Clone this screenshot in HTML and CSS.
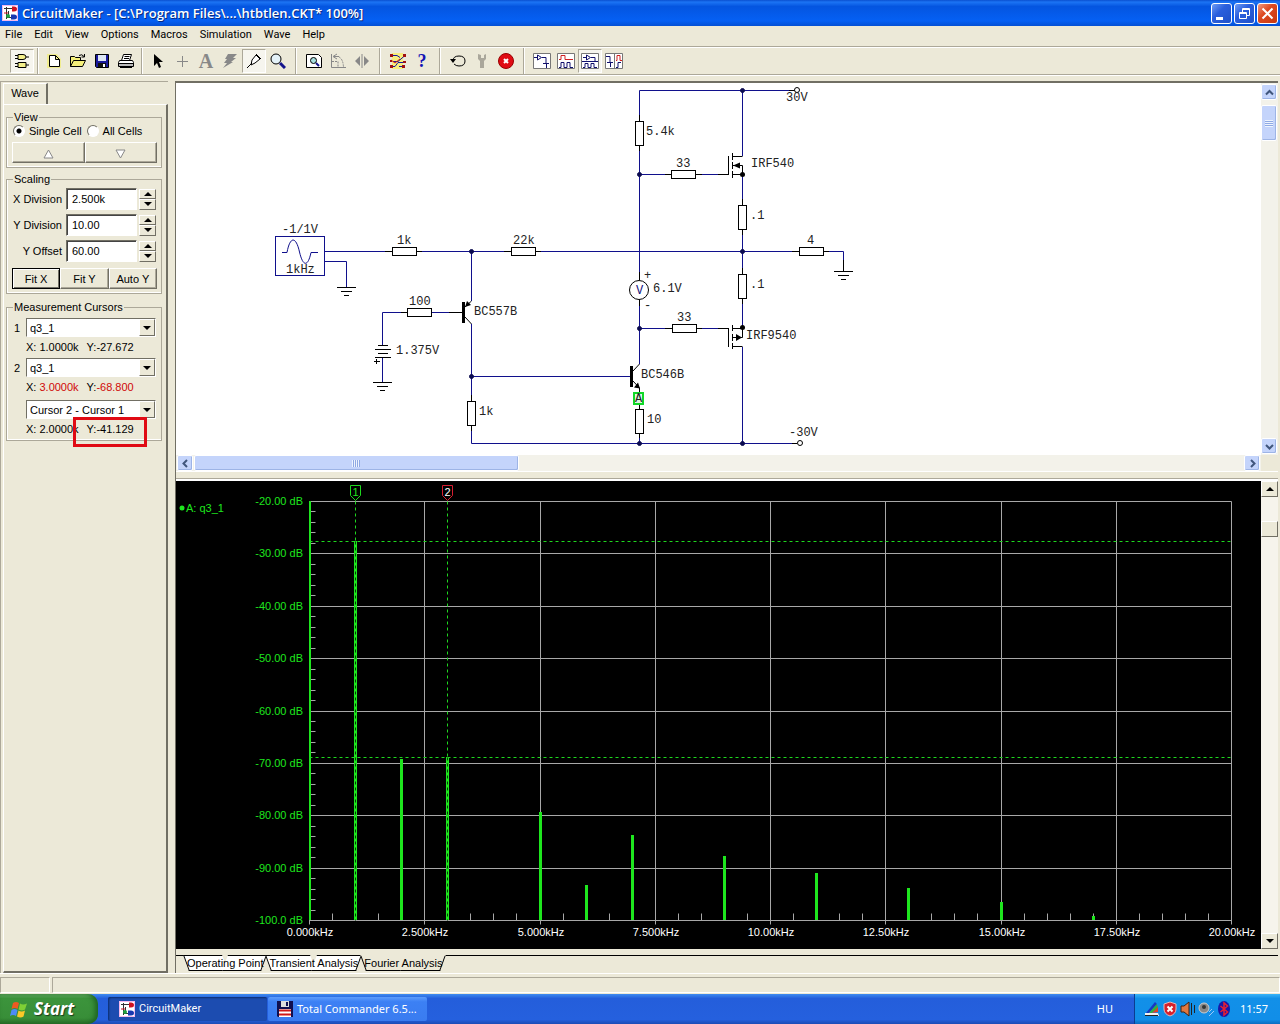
FILE: index.html
```html
<!DOCTYPE html>
<html lang="en">
<head>
    <meta charset="UTF-8">
    <meta name="viewport" content="width=device-width, initial-scale=1.0">
    <title>CircuitMaker</title>
    <link rel="stylesheet" href="styles.css">
</head>
<body>
    <svg class="defs" aria-hidden="true">
        <symbol id="app-icon" viewBox="0 0 16 16">
            <rect width="16" height="16" fill="#f4b8ec"/>
            <rect x="1" y="1" width="14" height="14" fill="#fff"/>
            <path d="M2 3.500H10M4.500 2V14M4.500 12.500H10M6.500 6V10" stroke="#333" fill="none"/>
            <path d="M10 1.500h2q3 0 3 2.500t-3 2.500h-2z" fill="#d01020"/>
            <path d="M9 9.500h3q3 0 3 2.500t-3 2.500H9z" fill="#1838b0"/>
            <circle cx="6" cy="11" r="2" fill="#20a040"/>
            <path d="M2 8h4" stroke="#d01020"/>
        </symbol>
        <symbol id="ground" viewBox="0 0 19 10">
            <path d="M0 .5H19M4 4.500H15M7 8.500H12" stroke="#000" fill="none"/>
        </symbol>
    </svg>

    <header class="titlebar">
        <svg class="icon16"><use href="#app-icon"/></svg>
        <h1 class="title">CircuitMaker - [C:\Program Files\...\htbtlen.CKT* 100%]</h1>
        <div class="window-buttons">
            <button class="win-btn" aria-label="Minimize"><svg viewBox="0 0 19 19"><path d="M4 13h7v3H4z" fill="#fff"/></svg></button>
            <button class="win-btn" aria-label="Restore"><svg viewBox="0 0 19 19"><path d="M4.500 8.500h7v6h-7zM4 9.500h8M7.500 8V4.500h7v7H12M7 5.500h8" stroke="#fff" fill="none"/></svg></button>
            <button class="win-btn close" aria-label="Close"><svg viewBox="0 0 19 19"><path d="M4.500 4.500l10 10M14.500 4.500l-10 10" stroke="#fff" stroke-width="2" fill="none"/></svg></button>
        </div>
    </header>

    <nav class="menu">
        <a href="#">File</a>
        <a href="#">Edit</a>
        <a href="#">View</a>
        <a href="#">Options</a>
        <a href="#">Macros</a>
        <a href="#">Simulation</a>
        <a href="#">Wave</a>
        <a href="#">Help</a>
    </nav>

    <div class="toolbar">
        <button class="tool pressed" aria-label="Digital mode"><svg viewBox="0 0 16 16"><path d="M4 1.500h5q3 0 3 2.500t-3 2.500H4zM4 9.500h8v5H4zM1 2.500h3M1 5.500h3M12 4h3M1 10.500h3M1 13.500h3M12 12h3" stroke="#000" fill="#f4f08c"/></svg></button>
        <span class="sep narrow"></span>
        <button class="tool" aria-label="New"><svg viewBox="0 0 16 16"><path d="M1 1h10l4 5v9H1z" fill="#f6f24a" opacity=".5"/><path d="M3.500 2.500h6l4 4v7h-10zM9.500 2.500v4h4" stroke="#000" fill="#fff"/></svg></button>
        <button class="tool" aria-label="Open"><svg viewBox="0 0 16 16"><path d="M.5 13.500v-10h4l1 1h5v3M.5 13.500l3-6h12l-3 6z" stroke="#000" fill="#f4ef7a"/><path d="M9 2.500q3-2 5 1M14.500 1v3h-3" stroke="#000" fill="none"/></svg></button>
        <button class="tool" aria-label="Save"><svg viewBox="0 0 16 16"><path d="M1.500 1.500h13v13h-12l-1-1z" stroke="#000" fill="#1a1a9c"/><path d="M4 2h8v6H4z" fill="#dce6f4"/><path d="M4 10h8v4H4z" fill="#111"/><path d="M9 11h2v3H9z" fill="#fff"/></svg></button>
        <button class="tool" aria-label="Print"><svg viewBox="0 0 16 16"><path d="M3.500 7.500l2-6h8l-2 6zM1.500 7.500h13l1 2v4H.5v-4zM.5 10.500h15" stroke="#000" fill="#fff"/><path d="M1 11h14v2H1z" fill="#bbb"/><path d="M6.500 3.500h5M6 5.500h5M2 14.500h12" stroke="#000"/></svg></button>
        <span class="sep narrow"></span>
        <button class="tool" aria-label="Select"><svg viewBox="0 0 16 16"><path d="M4 1v12l3-3 2 5 2-1-2-5h4z" fill="#000"/></svg></button>
        <button class="tool" aria-label="Wire"><svg viewBox="0 0 16 16"><path d="M8.500 3v11M3 8.500h11" stroke="#888"/></svg></button>
        <button class="tool letter" aria-label="Text">A</button>
        <button class="tool" aria-label="Delete"><svg viewBox="0 0 16 16"><path d="M6 1h9l-4 4h3l-5 4h2L1 15l4-5H2l3-4H3z" fill="#888"/></svg></button>
        <button class="tool pressed" aria-label="Probe"><svg viewBox="0 0 16 16"><path d="M1 15l5-5M6 7l4-5 4 4-5 4-4 2zM10 1l5 5" stroke="#000" fill="#fff"/></svg></button>
        <button class="tool" aria-label="Zoom"><svg viewBox="0 0 16 16"><circle cx="6" cy="6" r="5" stroke="#000" fill="#e4f2f8"/><path d="M10 10l5 5" stroke="#14148c" stroke-width="3"/></svg></button>
        <span class="sep"></span>
        <button class="tool" aria-label="Fit"><svg viewBox="0 0 16 16"><path d="M.5 1.500h12l3 3v10H.5z" stroke="#000" fill="#fff"/><circle cx="7.500" cy="7.500" r="3" stroke="#000" fill="#a8e0e0"/><path d="M10 10l3 3" stroke="#14148c" stroke-width="2"/></svg></button>
        <button class="tool" aria-label="Rotate"><svg viewBox="0 0 16 16"><path d="M1.500 1v13.500H16M4 3.500h5M7 1L3 3.500 7 6" stroke="#888" fill="none"/><path d="M2 8.500h6v6M9 4q4 2 4.500 10" stroke="#888" fill="none" stroke-dasharray="2 1"/></svg></button>
        <button class="tool" aria-label="Mirror"><svg viewBox="0 0 16 16"><path d="M6 3v10L1 8zM10 3v10l5-5z" fill="#888"/><path d="M8 1v14" stroke="#888"/></svg></button>
        <span class="sep"></span>
        <button class="tool" aria-label="Run mode"><svg viewBox="0 0 16 16"><path d="M2 0h11v16H2z" fill="#f7ee7c"/><path d="M2 2.500h5l3 2M3 8.500h5l7-6M2 13.500h3l3-4h7M9 13.500h5" stroke="#1a1a9c" fill="none"/><path d="M1 7l4 3 5-4" stroke="#d01818" fill="none"/><path d="M0 1h3v3H0zM13 1h3v3h-3zM0 7h2v2H0zM0 12h3v3H0zM12 12h3v3h-3zM13 8h3v2h-3z" fill="#a01010"/></svg></button>
        <button class="tool help" aria-label="Help">?</button>
        <span class="sep"></span>
        <button class="tool" aria-label="Reset"><svg viewBox="0 0 16 16"><path d="M3 8q0-5 6-5 6 0 6 5 0 5-6 5-3 0-5-2" stroke="#000" fill="none"/><path d="M0 6h6l-3 4z" fill="#000"/></svg></button>
        <button class="tool" aria-label="Step"><svg viewBox="0 0 16 16"><path d="M4 1v5l2 2v7h4V8l2-2V1l-2 1v3H7V2z" fill="#aaa79b"/></svg></button>
        <button class="tool" aria-label="Stop"><svg viewBox="0 0 16 16"><circle cx="8" cy="8" r="7.500" fill="#e00c14" stroke="#900"/><path d="M6 6l4 4M10 6l-4 4" stroke="#fff" stroke-width="2"/></svg></button>
        <span class="sep"></span>
        <button class="tool" aria-label="Schematic view"><svg class="big" viewBox="0 0 18 16"><path d="M.5.5h17v15H.5z" stroke="#777" fill="#fff"/><path d="M1 4.500h3M4.500 2v5l4-2.500zM9 4.500h4V10M10 10.500h6M13.500 11v4" stroke="#10106c" fill="none"/></svg></button>
        <button class="tool" aria-label="Wave view"><svg class="big" viewBox="0 0 18 16"><path d="M.5.5h17v15H.5z" stroke="#777" fill="#fff"/><path d="M2 6.500h2v-4h4v4h8" stroke="#d02020" fill="none"/><path d="M2 14.500h2v-5h3v5h3v-5h3v5h3" stroke="#10106c" fill="none"/></svg></button>
        <button class="tool pressed" aria-label="Split horizontal"><svg class="big" viewBox="0 0 18 16"><path d="M.5.5h17v15H.5z" stroke="#777" fill="#fff"/><path d="M2 4.500h3M5.500 2v5l4-2.500zM10 4.500h4v4M1 8.500h16M2 14.500h2v-4h3v4h3v-4h3v4h3" stroke="#10106c" fill="none"/></svg></button>
        <button class="tool" aria-label="Split vertical"><svg class="big" viewBox="0 0 18 16"><path d="M.5.5h17v15H.5zM9.500 1v14" stroke="#777" fill="#fff"/><path d="M1 3.500h4V9M2 9.500h6M5.500 10v4M11 14.500h2v-5h3" stroke="#10106c" fill="none"/><path d="M11 7.500h1v-5h3v5h2" stroke="#d02020" fill="none"/></svg></button>
    </div>

    <main class="main">
        <aside class="sidebar">
            <div class="side-tabs"><button class="side-tab">Wave</button></div>
            <div class="side-page">
                <fieldset class="group">
                    <legend>View</legend>
                    <div class="radios">
                        <input type="radio" name="cells" id="single" checked><label for="single">Single Cell</label>
                        <input type="radio" name="cells" id="all"><label for="all">All Cells</label>
                    </div>
                    <div class="button-row">
                        <button class="button" aria-label="Previous cell"><svg viewBox="0 0 11 10"><path d="M5.500 1L10 9H1z" stroke="#888" fill="#fff"/></svg></button>
                        <button class="button" aria-label="Next cell"><svg viewBox="0 0 11 10"><path d="M5.500 9L10 1H1z" stroke="#888" fill="#fff"/></svg></button>
                    </div>
                </fieldset>

                <fieldset class="group scaling">
                    <legend>Scaling</legend>
                    <div class="scale-row">
                        <label for="xdiv">X Division</label>
                        <input type="text" id="xdiv" value="2.500k">
                        <span class="spin"><button class="up" aria-label="Increase X division"></button><button class="down" aria-label="Decrease X division"></button></span>
                    </div>
                    <div class="scale-row">
                        <label for="ydiv">Y Division</label>
                        <input type="text" id="ydiv" value="10.00">
                        <span class="spin"><button class="up" aria-label="Increase Y division"></button><button class="down" aria-label="Decrease Y division"></button></span>
                    </div>
                    <div class="scale-row">
                        <label for="yoff">Y Offset</label>
                        <input type="text" id="yoff" value="60.00">
                        <span class="spin"><button class="up" aria-label="Increase Y offset"></button><button class="down" aria-label="Decrease Y offset"></button></span>
                    </div>
                    <div class="button-row fit-row">
                        <button class="button default">Fit X</button>
                        <button class="button">Fit Y</button>
                        <button class="button">Auto Y</button>
                    </div>
                </fieldset>

                <fieldset class="group cursors">
                    <legend>Measurement Cursors</legend>
                    <div class="cursor">
                        <label for="cursor1">1</label>
                        <span class="combo"><select id="cursor1"><option>q3_1</option></select><i class="combo-arrow"></i></span>
                        <p class="reading"><span>X: 1.0000k</span><span>Y:-27.672</span></p>
                    </div>
                    <div class="cursor">
                        <label for="cursor2">2</label>
                        <span class="combo"><select id="cursor2"><option>q3_1</option></select><i class="combo-arrow"></i></span>
                        <p class="reading"><span>X: <b>3.0000k</b></span><span>Y:<b>-68.800</b></span></p>
                    </div>
                    <div class="cursor diff">
                        <span class="combo"><select aria-label="Difference"><option>Cursor 2 - Cursor 1</option></select><i class="combo-arrow"></i></span>
                        <p class="reading"><span>X: 2.0000k</span><span>Y:-41.129</span></p>
                        <div class="highlight"></div>
                    </div>
                </fieldset>
            </div>
        </aside>

        <section class="workspace">
            <div class="pane">
                <svg class="schematic" viewBox="176 83 1085 372">
                    <!-- wires -->
                    <g class="wire">
                        <path d="M639.500 121V90.500H794M742.500 90.500V156M639.500 146V280M639.500 174.500H671M696 174.500H721"/>
                        <path d="M742.500 174.500V205M742.500 230V274M742.500 299V328M742.500 347V443.500"/>
                        <path d="M325 251.500H392M417 251.500H511M536 251.500H799M824 251.500H843.500V264"/>
                        <path d="M325 261.500H346.500V287M471.500 251.500V301M471.500 324V401M471.500 426V443.500H797"/>
                        <path d="M471.500 376.500H631M382.500 345V312.500H407M432 312.500H462M382.500 358V382"/>
                        <path d="M639.500 299V364M639.500 328.500H672M697 328.500H721M639.500 434V443"/>
                    </g>
                    <!-- signal source -->
                    <g class="source">
                        <rect x="275.500" y="236.500" width="49" height="39"/>
                        <path d="M282 252.500H287C290 236 296 236 299.500 252C303 267 308 267 311 252.500H318"/>
                    </g>
                    <!-- pin stubs -->
                    <path class="part" d="M385 251.500H392M417 251.500H422M504 251.500H511M536 251.500H541M401 312.500H407M449 312.500H462M665 174.500H671M696 174.500H702M718 174.500H728.500M665 328.500H672M697 328.500H702M718 328.500H728.500M792 251.500H799M824 251.500H829M639.500 115V121M639.500 146V151M742.500 199V205M742.500 230V235M742.500 268V274M742.500 299V304M639.500 403V409M639.500 434V438M471.500 395V401M471.500 426V431M843.500 260V271M789 90.500H795M792 443.500H797M639.500 272V280M639.500 299V306"/>
                    <!-- resistors -->
                    <g class="part box">
                        <rect x="392.500" y="247.500" width="24" height="8"/>
                        <rect x="511.500" y="247.500" width="24" height="8"/>
                        <rect x="407.500" y="308.500" width="24" height="8"/>
                        <rect x="671.500" y="170.500" width="24" height="8"/>
                        <rect x="672.500" y="324.500" width="24" height="8"/>
                        <rect x="799.500" y="247.500" width="24" height="8"/>
                        <rect x="635.500" y="121.500" width="8" height="24"/>
                        <rect x="738.500" y="205.500" width="8" height="24"/>
                        <rect x="738.500" y="274.500" width="8" height="24"/>
                        <rect x="635.500" y="409.500" width="8" height="24"/>
                        <rect x="467.500" y="401.500" width="8" height="24"/>
                        <circle cx="797" cy="90" r="2.500"/>
                        <circle cx="800" cy="443" r="2.500"/>
                        <circle cx="639" cy="290" r="9.500"/>
                    </g>
                    <use href="#ground" x="337" y="287" width="19" height="10"/>
                    <use href="#ground" x="373" y="382" width="19" height="10"/>
                    <use href="#ground" x="834" y="271" width="19" height="10"/>
                    <!-- battery -->
                    <path class="part" d="M378 345.500H388M375 349.500H391M378 353.500H388M375 357.500H391M374 361.500H380M376.500 359V364"/>
                    <!-- transistors -->
                    <path class="part" d="M465 307L471.500 301M465 317L471.500 324M633 371L639.500 364M633 381L639.500 388V392"/>
                    <path d="M462 302h3v21h-3zM465 307l2-6 4 4zM630 366h3v21h-3zM640 388.500l-6-1 4-5z"/>
                    <!-- mosfets -->
                    <path class="part" d="M728.500 156V175M732.500 153V160M732.500 162V169M732.500 171V178M732 156.500H742.500M732 165.500H742.500V174.500H732"/>
                    <path class="part" d="M728.500 328V347M732.500 325V331M732.500 334V341M732.500 343V349M732 328.500H742.500V337.500H732M732 346.500H742.500"/>
                    <path d="M733 165.500l7-3v6zM742 337.500l-6-3.500v7z"/>
                    <circle cx="742.500" cy="174.500" r="2.500"/>
                    <circle cx="742.500" cy="327.500" r="2.500"/>
                    <!-- junctions -->
                    <g class="junction">
                        <circle cx="742.500" cy="90.500" r="2"/>
                        <circle cx="639.500" cy="174.500" r="2"/>
                        <circle cx="742.500" cy="251.500" r="2"/>
                        <circle cx="471.500" cy="251.500" r="2"/>
                        <circle cx="471.500" cy="376.500" r="2"/>
                        <circle cx="639.500" cy="328.500" r="2"/>
                        <circle cx="639.500" cy="443.500" r="2"/>
                        <circle cx="742.500" cy="443.500" r="2"/>
                    </g>
                    <rect class="probe" x="634" y="393" width="9" height="11"/>
                    <g class="values">
                        <text x="282" y="233">-1/1V</text>
                        <text x="286" y="273">1kHz</text>
                        <text x="397" y="244">1k</text>
                        <text x="513" y="244">22k</text>
                        <text x="409" y="305">100</text>
                        <text x="474" y="315">BC557B</text>
                        <text x="396" y="354">1.375V</text>
                        <text x="479" y="415">1k</text>
                        <text x="646" y="135">5.4k</text>
                        <text x="676" y="167">33</text>
                        <text x="751" y="167">IRF540</text>
                        <text x="750" y="219">.1</text>
                        <text x="807" y="244">4</text>
                        <text x="786" y="101">30V</text>
                        <text x="644" y="279">+</text>
                        <text x="653" y="292">6.1V</text>
                        <text x="644" y="309">-</text>
                        <text x="750" y="288">.1</text>
                        <text x="677" y="321">33</text>
                        <text x="746" y="339">IRF9540</text>
                        <text x="641" y="378">BC546B</text>
                        <text x="647" y="423">10</text>
                        <text x="789" y="436">-30V</text>
                        <text x="635" y="402">A</text>
                        <text class="meter" x="636" y="294">V</text>
                    </g>
                </svg>
                <div class="xp-scroll vertical">
                    <button class="xp-btn" aria-label="Scroll up"><svg viewBox="0 0 9 9"><path d="M1 6.500L4.500 3 8 6.500"/></svg></button>
                    <div class="xp-thumb"></div>
                    <button class="xp-btn last" aria-label="Scroll down"><svg viewBox="0 0 9 9"><path d="M1 3L4.500 6.500 8 3"/></svg></button>
                </div>
                <div class="xp-scroll horizontal">
                    <button class="xp-btn" aria-label="Scroll left"><svg viewBox="0 0 9 9"><path d="M6 1L2.500 4.500 6 8"/></svg></button>
                    <div class="xp-thumb"></div>
                    <button class="xp-btn last" aria-label="Scroll right"><svg viewBox="0 0 9 9"><path d="M3 1l3.500 3.500L3 8"/></svg></button>
                </div>
            </div>
            <div class="splitter"></div>
            <div class="wave-pane">
                <svg class="chart" id="chart" viewBox="0 0 1085 468"></svg>
                <div class="scroll">
                    <button class="scroll-btn up" aria-label="Scroll chart up"></button>
                    <div class="scroll-thumb"></div>
                    <button class="scroll-btn down" aria-label="Scroll chart down"></button>
                </div>
            </div>
            <div class="analysis-tabs">
                <button class="tab">Operating Point</button>
                <button class="tab">Transient Analysis</button>
                <button class="tab active">Fourier Analysis</button>
            </div>
        </section>
    </main>

    <div class="statusbar"><span></span><span></span></div>

    <footer class="taskbar">
        <button class="start">
            <svg viewBox="0 0 18 17"><path d="M3 2q3-2 6 0L7.500 8q-3-2-6 0z" fill="#ee5a22"/><path d="M10 2.500q3 2 7 0L15 8.500q-3 2-6.500 0z" fill="#7fcf35"/><path d="M1.500 9q3-2 6 0L6 15q-3-2-6 0z" fill="#4d8bf5"/><path d="M8.500 9.500q3 2 6.500 0L13.500 15.500q-3 2-6.500 0z" fill="#fbc828"/></svg>
            Start
        </button>
        <button class="task current"><svg class="icon16"><use href="#app-icon"/></svg>CircuitMaker</button>
        <button class="task"><svg class="icon16" viewBox="0 0 16 16"><path d="M0 0h16v16H1l-1-1z" fill="#101050"/><path d="M4 0h8v6H4z" fill="#ddd"/><path d="M9 1h2v4H9z" fill="#101050"/><path d="M2 8h12v8H2z" fill="#fff"/><path d="M2 9.500h12M2 13.500h12" stroke="#d01818" stroke-width="2"/></svg>Total Commander 6.5...</button>
        <span class="lang">HU</span>
        <div class="tray">
            <svg viewBox="0 0 16 16"><path d="M1 12h13l1 3H1z" fill="#f2f2f2"/><path d="M2 12l9-11 2 2-8 9z" fill="#1838c0"/><path d="M5 12l8-9 1 4-6 5z" fill="#30b040"/><path d="M8 12l6-6v5z" fill="#e04028"/><path d="M1 14.500h13" stroke="#222"/></svg>
            <svg viewBox="0 0 16 16"><path d="M8 1l6 2v5q0 5-6 7-6-2-6-7V3z" fill="#d8202c" stroke="#e8b8b8"/><path d="M5.500 5.500l5 5M10.500 5.500l-5 5" stroke="#fff" stroke-width="2"/></svg>
            <svg viewBox="0 0 16 16"><path d="M1 5h3l5-4v14l-5-4H1z" fill="#e07840" stroke="#402010"/><path d="M11.500 2v12M14.500 4v8" stroke="#222"/></svg>
            <svg viewBox="0 0 16 16"><circle cx="6" cy="7" r="5" fill="#888" stroke="#ccc"/><circle cx="6" cy="6" r="2" fill="#333"/><path d="M11 11l3-3M11 15l5-5" stroke="#9cc8f8"/></svg>
            <svg viewBox="0 0 16 16"><ellipse cx="8" cy="8" rx="6" ry="8" fill="#1818a8"/><path d="M4.500 5l7 6L8 14V2l3.500 3-7 6" stroke="#e82030" stroke-width="1.500" fill="none"/></svg>
            <span class="clock">11:57</span>
        </div>
    </footer>

    <script src="script.js"></script>
</body>
</html>
```
FILE: styles.css
```css
* {
    box-sizing: border-box;
}

body {
    margin: 0;
    min-height: 100vh;
    display: flex;
    flex-direction: column;
    background-color: #ece9d8;
    font-family: "Liberation Sans", Arial, sans-serif;
    font-size: 11px;
    line-height: 12px;
    color: #000;
}

button, input, select {
    font: inherit;
    color: inherit;
    margin: 0;
    padding: 0;
    border: 0;
    border-radius: 0;
    background: none;
}

.defs {
    position: absolute;
    width: 0;
    height: 0;
}

.icon16 {
    width: 16px;
    height: 16px;
    flex: none;
}

/* Title bar */
.titlebar {
    display: flex;
    align-items: center;
    gap: 4px;
    height: 26px;
    padding: 0 2px;
    background: linear-gradient(#0a50d0, #1c74f4 8%, #0455e0 25%, #0560f4 80%, #0450d4);
}

.title {
    flex: 1;
    margin: 0;
    color: #fff;
    font: 600 13px/20px "Open Sans", "Noto Sans", sans-serif;
    text-shadow: 1px 1px #0a2a80;
    white-space: nowrap;
}

.window-buttons {
    display: flex;
    gap: 2px;
}

.win-btn {
    width: 21px;
    height: 21px;
    border: 1px solid #fff;
    border-radius: 3px;
    background: linear-gradient(135deg, #6f9df5, #2a5fdd 40%, #1f50c8);
}

.win-btn svg {
    display: block;
    width: 19px;
    height: 19px;
}

.win-btn.close {
    background: linear-gradient(135deg, #f09a80, #dd4a22 40%, #c8380e);
}

/* Menu */
.menu {
    display: flex;
    align-items: center;
    gap: 12px;
    height: 20px;
    padding: 0 5px 2px;
    font-family: Roboto, sans-serif;
}

.menu a {
    color: #000;
    text-decoration: none;
}

/* Toolbar */
.toolbar {
    display: flex;
    align-items: center;
    height: 30px;
    padding-left: 10px;
    margin-bottom: 5px;
    border-top: 1px solid #aca899;
    border-bottom: 1px solid #fff;
    box-shadow: inset 0 1px #fff, inset 0 -1px #aca899;
}

.tool {
    display: flex;
    align-items: center;
    justify-content: center;
    width: 24px;
    height: 24px;
}

.tool svg {
    flex: none;
    width: 16px;
    height: 16px;
}

.tool svg.big {
    width: 18px;
}

.tool.pressed {
    background-color: #f6f5ee;
    border: 1px solid;
    border-color: #aca899 #fff #fff #aca899;
}

.letter {
    color: #888;
    font: bold 20px/20px "Liberation Serif", serif;
}

.help {
    color: #1414b4;
    font: bold 18px/18px "Liberation Serif", serif;
}

.sep {
    width: 2px;
    height: 26px;
    margin: 0 5px;
    border-left: 1px solid #aca899;
    border-right: 1px solid #fff;
}

.sep.narrow {
    margin: 0 3px;
}

/* Main area */
.main {
    flex: 1;
    display: grid;
    grid-template-columns: 168px 1fr;
    column-gap: 7px;
    padding-right: 2px;
}

.sidebar {
    display: flex;
    flex-direction: column;
    padding-left: 2px;
    border-top: 1px solid #aca899;
    border-left: 1px solid #aca899;
}

.side-tabs {
    height: 22px;
    padding-top: 1px;
}

.side-tab {
    display: block;
    width: 45px;
    height: 21px;
    padding-bottom: 2px;
    border-left: 1px solid #fff;
    border-top: 1px solid #fff;
    border-right: 2px solid #716f64;
    background-color: #ece9d8;
}

.side-page {
    flex: 1;
    padding: 6px 4px 0 2px;
    border: 1px solid;
    border-color: #fff #716f64 #716f64 #fff;
    border-right-width: 2px;
    border-bottom-width: 2px;
}

.group {
    min-width: 0;
    margin: 0 0 5px;
    padding: 0 4px 4px 5px;
    border: 1px solid #aca899;
    box-shadow: inset 1px 0 #fff, inset 0 -1px #fff;
}

.group legend {
    margin-left: 1px;
    padding: 0 1px;
}

.radios {
    display: flex;
    align-items: center;
    height: 16px;
    margin-bottom: 3px;
    white-space: nowrap;
}

.radios input {
    appearance: none;
    flex: none;
    width: 12px;
    height: 12px;
    margin-left: 1px;
    border: 1px solid;
    border-color: #716f64 #fff #fff #716f64;
    border-radius: 50%;
    background-color: #fff;
}

.radios input:checked {
    background-image: radial-gradient(#000 2px, #fff 3px);
}

.radios label {
    margin: 0 4px;
}

.button-row {
    display: flex;
}

.button {
    flex: 1;
    height: 21px;
    border: 1px solid;
    border-color: #fff #716f64 #716f64 #fff;
    box-shadow: inset -1px -1px #aca899;
    white-space: nowrap;
}

.button svg {
    width: 11px;
    height: 10px;
    vertical-align: middle;
}

.button.default {
    border-color: #000;
    box-shadow: inset 1px 1px #fff, inset -1px -1px #716f64;
}

.scaling {
    padding-top: 3px;
}

.scale-row {
    display: grid;
    grid-template-columns: 52px 71px 17px;
    column-gap: 2px;
    align-items: center;
    margin-bottom: 4px;
}

.scale-row label {
    padding-right: 2px;
    text-align: right;
    white-space: nowrap;
}

.scale-row input {
    width: 100%;
    height: 22px;
    padding: 0 5px;
    border: 1px solid;
    border-color: #716f64 #fff #fff #716f64;
    box-shadow: inset 1px 1px #444;
    background-color: #fff;
}

.spin {
    display: grid;
    height: 21px;
}

.spin button, .scroll-btn, .combo-arrow {
    display: flex;
    align-items: center;
    justify-content: center;
    border: 1px solid;
    border-color: #fff #716f64 #716f64 #fff;
    background-color: #ece9d8;
}

.up::before, .down::before, .combo-arrow::before {
    content: "";
    border: 4px solid transparent;
    border-top-width: 0;
    border-bottom-color: #000;
}

.down::before, .combo-arrow::before {
    border-top: 4px solid #000;
    border-bottom-width: 0;
}

.fit-row {
    margin-top: 6px;
}

.cursors {
    margin-top: 7px;
    padding-top: 5px;
    padding-bottom: 0;
}

.cursor {
    position: relative;
    display: grid;
    grid-template-columns: 14px 130px;
    align-items: center;
}

.cursor label {
    padding-left: 2px;
}

.cursor .combo, .reading {
    grid-column: 2;
}

.cursor.diff {
    margin-top: 2px;
}

.combo {
    position: relative;
}

.combo select {
    appearance: none;
    display: block;
    width: 100%;
    height: 19px;
    padding: 0 3px;
    border: 1px solid;
    border-color: #716f64 #fff #fff #716f64;
    background-color: #fff;
}

.combo-arrow {
    position: absolute;
    top: 1px;
    right: 1px;
    width: 16px;
    height: 17px;
    pointer-events: none;
}

.reading {
    display: flex;
    gap: 8px;
    margin: 0;
    line-height: 21px;
    white-space: nowrap;
}

.reading b {
    font-weight: normal;
    color: #d00808;
}

.highlight {
    position: absolute;
    top: 17px;
    left: 61px;
    width: 74px;
    height: 30px;
    border: 3px solid #e00a14;
}

/* Workspace */
.workspace {
    display: flex;
    flex-direction: column;
    border-left: 1px solid #716f64;
    border-top: 2px solid #716f64;
}

.pane {
    display: grid;
    grid-template-columns: 1fr 17px;
}

.schematic, .chart {
    display: block;
    width: 100%;
}

.schematic {
    background-color: #fff;
}

.wire {
    stroke: #10108c;
    fill: none;
}

.part {
    stroke: #000;
    fill: none;
}

.part.box {
    fill: #fff;
}

.source {
    stroke: #10108c;
    fill: none;
}

.junction {
    fill: #0c0c50;
    stroke: #0c0c50;
}

.probe {
    fill: #dff5df;
    stroke: #10d828;
    stroke-width: 2;
}

.values {
    font-family: "Liberation Mono", "Courier New", monospace;
    font-size: 12px;
    fill: #222;
}

.values .meter {
    fill: #10107c;
}

.xp-scroll {
    display: flex;
    gap: 1px;
    background-color: #f3f2ea;
}

.xp-scroll.vertical {
    flex-direction: column;
    padding: 1px 0;
}

.xp-scroll.horizontal {
    padding: 0 1px;
}

.xp-btn, .xp-thumb {
    display: flex;
    align-items: center;
    justify-content: center;
    flex: none;
    border: 1px solid #fff;
    border-radius: 2px;
    box-shadow: inset -1px -1px #9db4e6;
    background: #c4d4fb;
}

.xp-btn {
    width: 16px;
    height: 16px;
}

.xp-btn.last {
    margin-left: auto;
}

.vertical .xp-btn.last {
    margin: auto 0 0;
}

.xp-btn svg {
    width: 9px;
    height: 9px;
    fill: none;
    stroke: #40567c;
    stroke-width: 2;
}

.vertical .xp-thumb {
    width: 16px;
    height: 36px;
    margin-top: 4px;
}

.horizontal .xp-thumb {
    width: 30%;
}

.xp-thumb::before {
    content: "";
    width: 8px;
    height: 7px;
    background: repeating-linear-gradient(90deg, #eef4fe 0 1px, #8fa9e4 1px 2px);
}

.vertical .xp-thumb::before {
    background: repeating-linear-gradient(#eef4fe 0 1px, #8fa9e4 1px 2px);
}

.splitter {
    height: 10px;
    border-top: 1px solid #fff;
    border-bottom: 2px solid #fff;
    box-shadow: inset 0 -1px #aca899;
}

.wave-pane {
    display: grid;
    grid-template-columns: 1fr 17px;
}

.chart {
    background-color: #000;
    font-size: 11px;
}

.chart .grid {
    stroke: #a8a8a8;
}

.chart .axis {
    stroke: #1ee61e;
    stroke-width: 2;
}

.chart .bar {
    fill: #1ee61e;
}

.chart .cursor-line {
    stroke: #1ed81e;
    stroke-dasharray: 3 3;
}

.chart .bar-dash {
    stroke: #053c05;
    stroke-dasharray: 3 3;
}

.chart .db {
    fill: #1ee61e;
    text-anchor: end;
}

.chart .khz {
    fill: #fff;
    text-anchor: middle;
}

.chart .trace {
    fill: #1ee61e;
}

.chart .flag {
    fill: #000;
    stroke: #1ed81e;
}

.chart .flag.second {
    stroke: #d81e32;
}

.chart .flag-text {
    fill: #1ee61e;
    text-anchor: middle;
}

.chart .flag-text.second {
    fill: #fff;
}

.scroll {
    display: flex;
    flex-direction: column;
    background-color: #f6f4ec;
}

.scroll-btn, .scroll-thumb {
    flex: none;
    width: 17px;
    height: 16px;
}

.scroll-thumb {
    margin-top: 24px;
    border: 1px solid;
    border-color: #fff #716f64 #716f64 #fff;
    background-color: #ece9d8;
}

.scroll-btn.down {
    margin-top: auto;
}

/* Analysis tabs */
.analysis-tabs {
    display: flex;
    padding-top: 6px;
    height: 23px;
}

.analysis-tabs::before, .analysis-tabs::after {
    content: "";
    width: 8px;
    border-top: 1px solid #000;
}

.analysis-tabs::after {
    flex: 1;
}

.tab {
    position: relative;
    z-index: 0;
    height: 16px;
    padding: 0 3px;
    white-space: nowrap;
}

.tab::before, .tab::after {
    content: "";
    position: absolute;
    z-index: -1;
    top: 0;
    bottom: 0;
    border: 1px solid #000;
    background-color: #fff;
}

.tab::before {
    left: 2px;
    right: 50%;
    border-right: 0;
    transform: skewX(20deg);
}

.tab::after {
    left: 50%;
    right: 2px;
    border-left: 0;
    transform: skewX(-20deg);
}

.tab.active::before, .tab.active::after {
    border-top-color: #ece9d8;
    background-color: #ece9d8;
}

/* Status bar */
.statusbar {
    display: grid;
    grid-template-columns: 50px 1fr;
    gap: 2px;
    height: 21px;
    padding: 3px 0 1px;
    border-top: 1px solid #fff;
}

.statusbar span {
    border: 1px solid;
    border-color: #aca899 #fff #fff #aca899;
}

/* Taskbar */
.taskbar {
    display: flex;
    align-items: stretch;
    height: 30px;
    background: linear-gradient(#3f8cf0, #245edb 15%, #2560de 85%, #1c4cb4);
    color: #fff;
    font-family: "Noto Sans", sans-serif;
}

.start {
    display: flex;
    align-items: center;
    gap: 6px;
    width: 98px;
    margin-right: 10px;
    padding-left: 10px;
    border-radius: 0 10px 10px 0;
    background: linear-gradient(#6cb66c, #3c943c 15%, #388e38 80%, #2a702a);
    box-shadow: inset -3px 0 5px #1e6420;
    font: italic bold 17px/20px "Open Sans", sans-serif;
    text-shadow: 1px 1px 1px #1a3c1a;
}

.start svg {
    width: 18px;
    height: 17px;
}

.task {
    display: flex;
    align-items: center;
    gap: 4px;
    width: 159px;
    margin: 3px 1px 3px 0;
    padding-left: 9px;
    border-radius: 2px;
    background: linear-gradient(#5c9cfc, #3c80f4 20%, #3a7cf0);
    white-space: nowrap;
}

.task.current {
    padding-left: 11px;
    background: #1c4cb0;
    box-shadow: inset 1px 1px 2px #0c2c70;
    font-family: Roboto, sans-serif;
}

.lang {
    margin: auto 21px auto auto;
}

.tray {
    display: flex;
    align-items: center;
    gap: 2px;
    width: 146px;
    padding-left: 9px;
    border-left: 1px solid #0c3c90;
    background: linear-gradient(#38b4f8, #1290e8 15%, #118ee8 85%, #0c6cc0);
}

.tray svg {
    width: 16px;
    height: 16px;
}

.clock {
    margin-left: 6px;
}
```
FILE: script.js
```js
// Plot area inside the chart svg
const left = 133;
const right = 1055;
const top_ = 20;
const bottom = 439;

const maxKhz = 20;
const topDb = -20;
const bottomDb = -100;

// Fourier components: frequency in kHz, level in dB
const harmonics = [
    [1, -27.672],
    [2, -69.2],
    [3, -68.8],
    [5, -79.4],
    [6, -93.3],
    [7, -83.8],
    [9, -87.8],
    [11, -91.1],
    [13, -93.8],
    [15, -96.6],
    [17, -99.2],
];

const cursors = [
    { khz: 1, db: -27.672, label: '1' },
    { khz: 3, db: -68.8, label: '2' },
];

const chart = document.getElementById('chart');

function add(tag, className, attrs, text) {
    const el = document.createElementNS('http://www.w3.org/2000/svg', tag);
    el.setAttribute('class', className);
    for (const name in attrs) {
        el.setAttribute(name, attrs[name]);
    }
    if (text) {
        el.textContent = text;
    }
    chart.appendChild(el);
}

function line(className, x1, y1, x2, y2) {
    add('line', className, { x1: x1 + 0.5, y1: y1 + 0.5, x2: x2 + 0.5, y2: y2 + 0.5 });
}

function getX(khz) {
    return Math.round(left + (right - left) * khz / maxKhz);
}

function getY(db) {
    return Math.round(top_ + (bottom - top_) * (topDb - db) / (topDb - bottomDb));
}

// Horizontal grid lines and dB labels
for (let db = topDb; db >= bottomDb; db -= 2) {
    const y = getY(db);
    if (db % 10 === 0) {
        line('grid', left, y, right, y);
        add('text', 'db', { x: 127, y: y + 4 }, db.toFixed(db === -100 ? 1 : 2) + ' dB');
    } else {
        line('grid', left, y, left + 6, y);
    }
}

// Vertical grid lines and frequency labels
for (let khz = 0; khz <= maxKhz; khz += 0.5) {
    const x = getX(khz);
    if (khz % 2.5 === 0) {
        line('grid', x, top_, x, bottom + 4);
        add('text', 'khz', { x: x + 1, y: bottom + 16 }, khz.toFixed(khz < 10 ? 3 : 2) + 'kHz');
    } else {
        line('grid', x, bottom - 7, x, bottom);
    }
}

add('line', 'axis', { x1: left + 1, y1: top_, x2: left + 1, y2: bottom });

for (const [khz, db] of harmonics) {
    add('rect', 'bar', { x: getX(khz) - 1, y: getY(db), width: 3, height: bottom - getY(db) });
}

// Measurement cursors
cursors.forEach(function (c, i) {
    const x = getX(c.khz);
    const y = getY(c.db);
    const extra = i === 1 ? ' second' : '';
    line('cursor-line', left, y, right, y);
    line('cursor-line', x, top_, x, y);
    line('bar-dash', x, y, x, bottom);
    add('path', 'flag' + extra, { d: `M${x - 4.5} 4.5h10v10l-5 5l-5 -5z` });
    add('text', 'flag-text' + extra, { x: x + 0.5, y: 15 }, c.label);
});

add('circle', 'trace', { cx: 6, cy: 27, r: 2.5 });
add('text', 'trace', { x: 10, y: 31 }, 'A: q3_1');
```
